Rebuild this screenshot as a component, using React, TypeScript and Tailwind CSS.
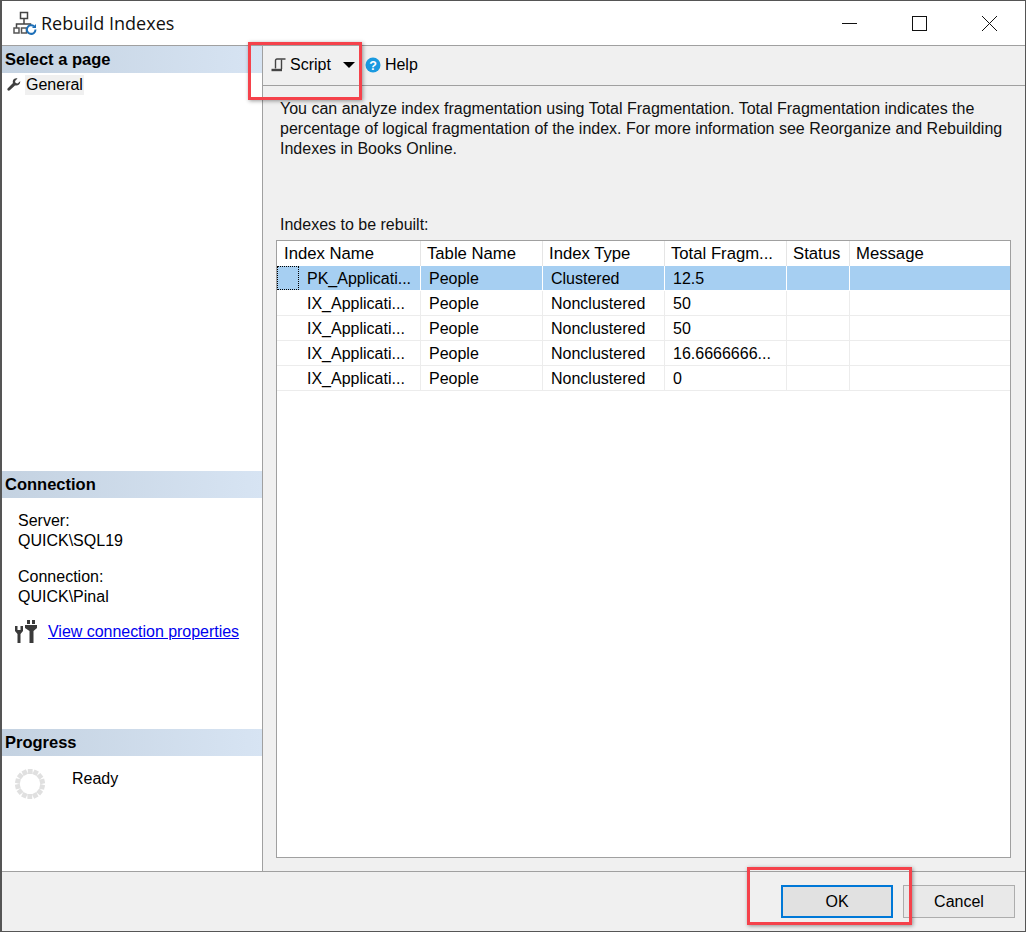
const columns = [
  { label: "Index Name", width: "w-[144px]" },
  { label: "Table Name", width: "w-[122px]" },
  { label: "Index Type", width: "w-[122px]" },
  { label: "Total Fragm...", width: "w-[122px]" },
  { label: "Status", width: "w-[63px]" },
  { label: "Message", width: "flex-1" },
];

const rows = [
  { name: "PK_Applicati...", type: "Clustered", frag: "12.5" },
  { name: "IX_Applicati...", type: "Nonclustered", frag: "50" },
  { name: "IX_Applicati...", type: "Nonclustered", frag: "50" },
  { name: "IX_Applicati...", type: "Nonclustered", frag: "16.6666666..." },
  { name: "IX_Applicati...", type: "Nonclustered", frag: "0" },
];

function SectionHeader({ title }: { title: string }) {
  return (
    <div className="h-[27px] flex items-center pl-[3px] font-bold text-[16.5px] text-black bg-gradient-to-r from-[#c4d2e1] to-[#d7e4f3]">
      {title}
    </div>
  );
}

function TitleIcon() {
  return (
    <svg width="24" height="24" viewBox="0 0 24 24" fill="none" className="shrink-0">
      <rect x="7.500" y="1.500" width="7" height="6" stroke="#444" strokeWidth="1.500" />
      <path d="M11 8v5M3.500 17v-4h14v2" stroke="#444" strokeWidth="1.500" />
      <rect x="1" y="17" width="5" height="5" stroke="#555" strokeWidth="1.500" />
      <rect x="8.500" y="17" width="5" height="5" stroke="#555" strokeWidth="1.500" />
      <path d="M22.500 18.500a4.300 4.300 0 1 1-1.500-3.200" stroke="#1c6fb8" strokeWidth="2" />
      <path d="M23 13v4h-4z" fill="#1c6fb8" />
    </svg>
  );
}

function WrenchIcon() {
  return (
    <svg width="14" height="14" viewBox="0 0 14 14" fill="#404040">
      <path d="M13.200 3.200 10.600 5.600 8.600 5 8 3l2.500-2.600C8.400-.2 6 1 5.800 3.200c-.1.700 0 1.300.2 1.800L.8 10.200c-.6.600-.6 1.400-.1 2s1.500.6 2.100 0L8 7.400c2.700.9 5.700-1.400 5.200-4.200z" />
    </svg>
  );
}

function ScriptIcon() {
  return (
    <svg width="15" height="14" viewBox="0 0 15 14" fill="none" stroke="#444">
      <path d="M4.500 10.500V2.500c0-1 .5-1.500 1.500-1.500h8.500" strokeWidth="1.400" />
      <path d="M10.500 1.500v9.500" strokeWidth="1.400" />
      <path d="M.5 12h10.500" strokeWidth="2.400" />
    </svg>
  );
}

function HelpIcon() {
  return (
    <svg width="16" height="16" viewBox="0 0 16 16">
      <circle cx="8" cy="8" r="7.500" fill="#1a9ae0" />
      <text x="8" y="12.500" textAnchor="middle" fontSize="12.500" fontWeight="700" fill="#fff" fontFamily="Liberation Sans, sans-serif">?</text>
    </svg>
  );
}

function PlugIcon() {
  return (
    <svg width="24" height="24" viewBox="0 0 24 24" fill="#3a3a3a">
      <path d="M1 6h2.500v4h3V6H9v5l-2.500 3v9h-3v-9L1 11z" />
      <rect x="13" y="0" width="3" height="4" />
      <rect x="18" y="0" width="3" height="4" />
      <path d="M11 5h12v3l-3.500 3v12h-4V11L11 8z" />
    </svg>
  );
}

function Spinner() {
  const dots = Array.from({ length: 14 }, (_, i) => (i * 360) / 14);
  return (
    <svg width="30" height="30" viewBox="0 0 30 30">
      {dots.map((deg) => (
        <rect key={deg} x="12.800" y="0" width="4.800" height="5" fill="#e0e0e0" transform={`rotate(${deg} 15 15)`} />
      ))}
    </svg>
  );
}

export default function App() {
  return (
    <div className="relative w-[1026px] h-[932px] flex flex-col overflow-hidden bg-white border-l-2 border-r border-t border-b border-[#555] text-black text-[16px] font-['Liberation_Sans',Arial,sans-serif]">
      {/* Title bar */}
      <div className="h-[45px] shrink-0 flex items-center border-b border-[#a0a0a0]">
        <div className="ml-[11px] mr-[4px]">
          <TitleIcon />
        </div>
        <span className="text-[18px] text-[#111] font-['Open_Sans',sans-serif]">Rebuild Indexes</span>
        <div className="ml-auto flex items-center">
          <div className="w-[70px] flex justify-center">
            <div className="w-[15px] h-px bg-[#111]" />
          </div>
          <div className="w-[70px] flex justify-center">
            <div className="w-[15px] h-[15px] border border-[#111]" />
          </div>
          <div className="w-[70px] mr-[1px] flex justify-center">
            <svg width="15" height="15" viewBox="0 0 15 15" stroke="#111" strokeWidth="1">
              <path d="M0 0l15 15M15 0L0 15" />
            </svg>
          </div>
        </div>
      </div>

      {/* Body */}
      <div className="flex-1 flex min-h-0">
        {/* Left panel */}
        <div className="w-[261px] shrink-0 flex flex-col bg-white border-r border-[#a0a0a0]">
          <SectionHeader title="Select a page" />
          <div className="flex items-center h-[22px] mt-px pl-[5px]">
            <WrenchIcon />
            <span className="ml-[4px] px-[1px] h-[20px] leading-[20px] bg-[#f0f0f0]">General</span>
          </div>
          <div className="flex-1" />
          <div className="h-[258px] shrink-0">
            <SectionHeader title="Connection" />
            <div className="pl-[16px] pt-[13px] leading-[20px]">
              <div>Server:</div>
              <div>QUICK\SQL19</div>
              <div className="mt-[16px]">Connection:</div>
              <div>QUICK\Pinal</div>
            </div>
            <div className="flex items-center mt-[13px] pl-[12px]">
              <PlugIcon />
              <a className="ml-[10px] text-[#0000ee] underline tracking-[-0.03px]">View connection properties</a>
            </div>
          </div>
          <div className="h-[142px] shrink-0">
            <SectionHeader title="Progress" />
            <div className="flex pt-[13px] pl-[13px]">
              <Spinner />
              <span className="ml-[27px] leading-[20px]">Ready</span>
            </div>
          </div>
        </div>

        {/* Right panel */}
        <div className="flex-1 min-w-0 flex flex-col bg-[#f0f0f0]">
          <div className="h-[40px] shrink-0 flex items-center pl-[8px] pb-[2px] border-b border-[#a0a0a0]">
            <ScriptIcon />
            <span className="ml-[4px]">Script</span>
            <span className="ml-[12px] w-0 h-0 border-x-[6px] border-x-transparent border-t-[6px] border-t-black" />
            <span className="ml-[10px]"><HelpIcon /></span>
            <span className="ml-[4px]">Help</span>
          </div>
          <div className="pl-[17px] pr-[20px] pt-[13px] leading-[20px] text-[#111]">
            You can analyze index fragmentation using Total Fragmentation. Total Fragmentation indicates the percentage of logical fragmentation of the index. For more information see Reorganize and Rebuilding Indexes in Books Online.
          </div>
          <div className="pl-[17px] mt-[56px] leading-[20px] text-[#111]">Indexes to be rebuilt:</div>
          <div className="ml-[13px] mr-[14px] mt-[5px] flex-1 min-h-0 bg-white border border-[#a0a0a0]">
            <div className="flex h-[25px]">
              {columns.map((c, i) => (
                <div key={c.label} className={`${c.width} shrink-0 ${i === 0 ? "pl-[7px]" : "pl-[6px]"} text-[16.7px] leading-[25px] border-r border-[#e5e5e5] last:border-r-0`}>
                  {c.label}
                </div>
              ))}
            </div>
            {rows.map((r, i) => {
              const cell = i === 0 ? "bg-[#a6cff2] border-white" : "border-[#ececec]";
              return (
                <div key={i} className={`flex h-[25px] leading-[26px] border-b ${i === 0 ? "border-white" : "border-[#ececec]"}`}>
                  <div className={`w-[144px] shrink-0 relative pl-[30px] border-r ${cell}`}>
                    {i === 0 && (
                      <div className="absolute left-0 top-0 w-[22px] h-[24px] border border-dotted border-black" />
                    )}
                    {r.name}
                  </div>
                  <div className={`w-[122px] shrink-0 pl-[8px] border-r ${cell}`}>People</div>
                  <div className={`w-[122px] shrink-0 pl-[8px] border-r ${cell}`}>{r.type}</div>
                  <div className={`w-[122px] shrink-0 pl-[8px] border-r ${cell}`}>{r.frag}</div>
                  <div className={`w-[63px] shrink-0 border-r ${cell}`} />
                  <div className={`flex-1 ${i === 0 ? "bg-[#a6cff2]" : ""}`} />
                </div>
              );
            })}
          </div>
          <div className="h-[13px] shrink-0" />
        </div>
      </div>

      {/* Bottom bar */}
      <div className="h-[60px] shrink-0 flex items-start justify-end pt-[13px] pr-[10px] gap-[10px] bg-[#f0f0f0] border-t border-[#a0a0a0]">
        <button className="w-[112px] h-[33px] bg-[#e1e1e1] border-2 border-[#0078d7]">OK</button>
        <button className="w-[112px] h-[33px] bg-[#e9e9e9] border border-[#adadad]">Cancel</button>
      </div>

      {/* Red callouts drawn over the screenshot */}
      <div className="absolute left-[246px] top-[41px] w-[114px] h-[58px] border-[3px] border-[#f5424b] shadow-[1px_1px_4px_rgba(0,0,0,0.4)]" />
      <div className="absolute left-[745px] top-[866px] w-[165px] h-[58px] border-[3px] border-[#f5424b] shadow-[1px_1px_4px_rgba(0,0,0,0.4)]" />
    </div>
  );
}
